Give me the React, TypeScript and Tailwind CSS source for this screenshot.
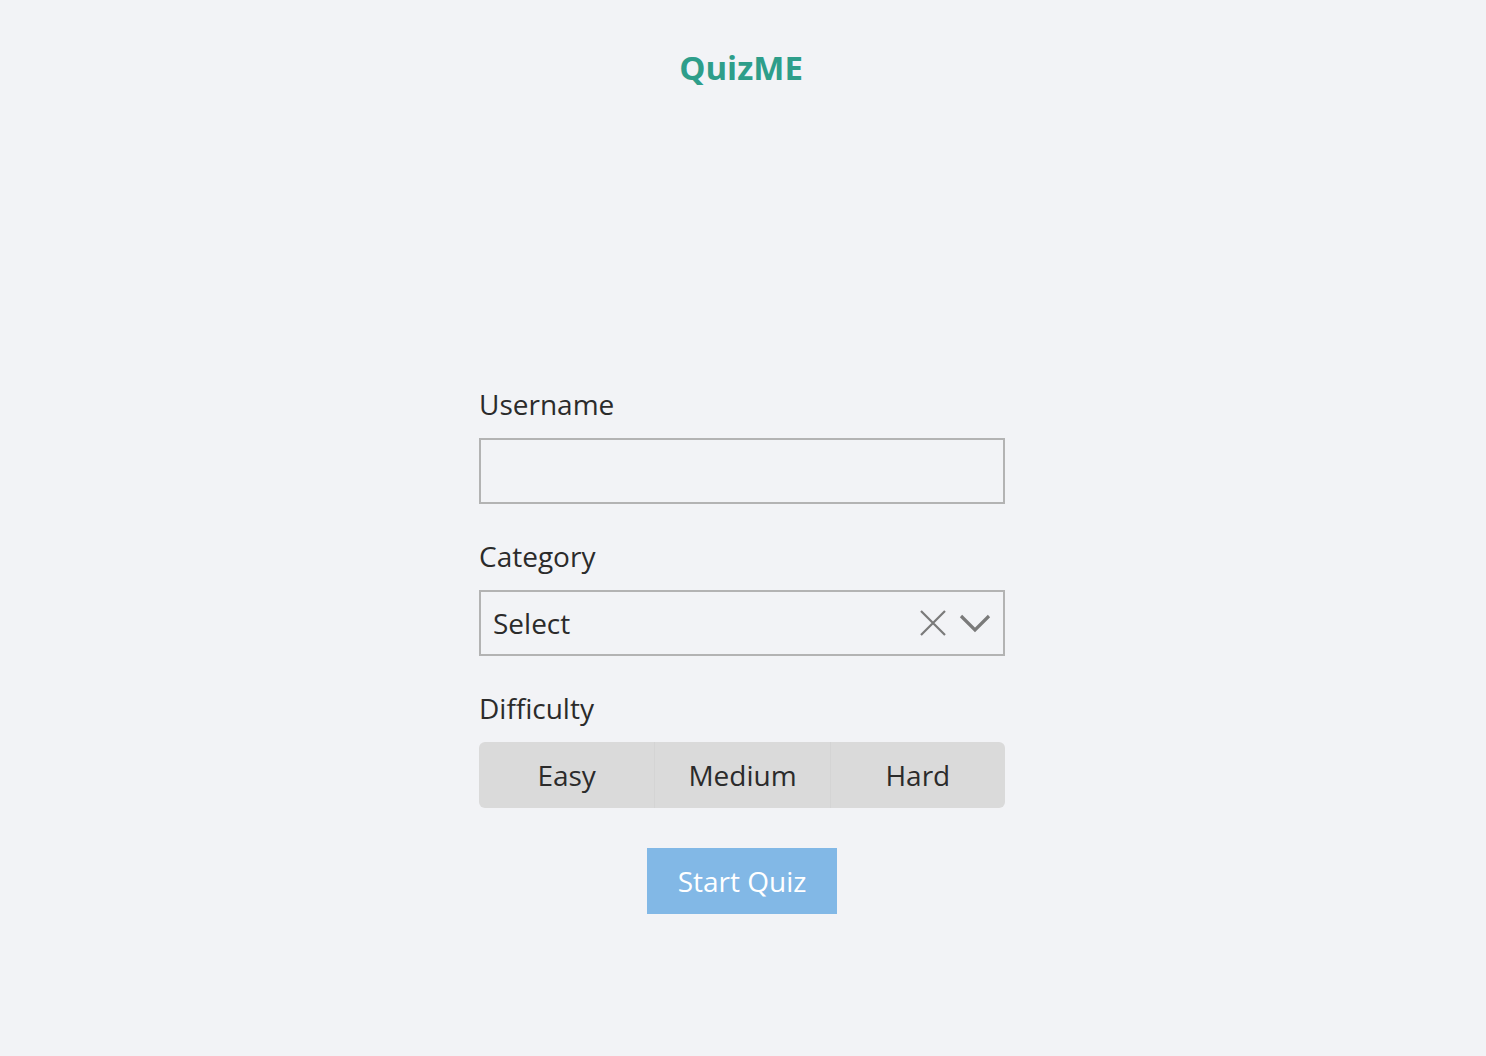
import { useState } from 'react'

const font = { fontFamily: '"Open Sans", "Noto Sans", sans-serif' }

const levels = ['Easy', 'Medium', 'Hard']

export default function App() {
  const [name, setName] = useState('')
  const [level, setLevel] = useState<string | null>(null)

  return (
    <div className="min-h-[1056px] w-full bg-[#f2f3f6] flex flex-col items-center" style={font}>
      <h1 className="mt-[46px] -ml-[4px] text-[33px] leading-[44px] font-bold text-[#2e9e8a]">QuizME</h1>

      <form className="mt-[296px] -ml-[2px] w-[526px] flex flex-col" onSubmit={(e) => e.preventDefault()}>
        <label className="text-[28px] leading-[36px] text-[#2b2b2b]">Username</label>
        <input
          value={name}
          onChange={(e) => setName(e.target.value)}
          className="mt-[16px] h-[66px] border-2 border-[#b3b3b3] bg-transparent px-[14px] text-[28px] outline-none"
        />

        <label className="mt-[34px] text-[28px] leading-[36px] text-[#2b2b2b]">Category</label>
        <div className="mt-[16px] h-[66px] border-2 border-[#b3b3b3] flex items-center pl-[12px] pr-[12px]">
          <span className="flex-1 text-[28px] text-[#2b2b2b]">Select</span>
          {/* clear + chevron */}
          <svg width="28" height="28" viewBox="0 0 28 28" className="mr-[12px]">
            <path d="M2 2 L26 26 M26 2 L2 26" stroke="#7a7a7a" strokeWidth="2.2" fill="none" />
          </svg>
          <svg width="32" height="20" viewBox="0 0 32 20">
            <path d="M2 3 L16 17 L30 3" stroke="#7a7a7a" strokeWidth="3.2" fill="none" />
          </svg>
        </div>

        <label className="mt-[34px] text-[28px] leading-[36px] text-[#2b2b2b]">Difficulty</label>
        <div className="mt-[16px] h-[66px] rounded-[6px] bg-[#dadada] grid grid-cols-3 overflow-hidden">
          {levels.map((l, i) => (
            <button
              key={l}
              type="button"
              onClick={() => setLevel(l)}
              className={`text-[28px] text-[#2b2b2b] ${i > 0 ? 'border-l border-[#d4d4d4]' : ''} ${level === l ? 'bg-[#c8c8c8]' : ''}`}
            >
              {l}
            </button>
          ))}
        </div>

        <button
          type="submit"
          className="mt-[40px] self-center h-[66px] w-[190px] bg-[#82b8e6] text-white text-[28px]"
        >
          Start Quiz
        </button>
      </form>
    </div>
  )
}
